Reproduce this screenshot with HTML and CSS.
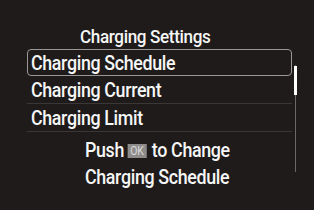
FILE: index.html
```html
<!DOCTYPE html>
<html>
<head>
<meta charset="utf-8">
<link rel="stylesheet" href="styles.css">
</head>
<body>
<div class="screen">
  <div class="main">
    <div class="title"><span class="tx">Charging Settings</span></div>
    <div class="list">
      <div class="row selected"><span class="tx">Charging Schedule</span></div>
      <div class="row"><span class="tx">Charging Current</span></div>
      <div class="row"><span class="tx">Charging Limit</span></div>
    </div>
    <div class="hint first"><span class="tx">Push<span class="ok">OK</span>to Change</span></div>
    <div class="hint"><span class="tx">Charging Schedule</span></div>
  </div>
  <div class="scroll"><div class="thumb"></div></div>
</div>
</body>
</html>
```
FILE: styles.css
```css
html, body { margin: 0; padding: 0; background: #ffffff; }
body { width: 316px; height: 212px; overflow: hidden; }
.screen {
  width: 314px; height: 210px; background: #1e1b1a;
  display: flex; color: #f6f6f6;
  font-family: Roboto, "Open Sans", sans-serif; font-weight: 500;
}
.tx { display: inline-block; white-space: nowrap; transform: scaleX(0.87); transform-origin: left center; }
.main { width: 295px; display: flex; flex-direction: column; }
.title {
  font-size: 19px; letter-spacing: -0.4px; line-height: 20px;
  margin-top: 27px; padding-left: 80px;
}
.title .tx { transform: scaleX(0.9); }
.list { margin: 2px 0 0 27px; width: 265px; }
.row {
  height: 28px; box-sizing: border-box; padding-left: 4px;
  font-size: 20.5px; letter-spacing: -0.4px; line-height: 28px;
  border-bottom: 1px solid #3a3736;
}
.row.selected { border: 1px solid #9a9897; border-radius: 4px; height: 27px; padding-left: 3px; line-height: 26px; }
.hint {
  font-size: 20.5px; letter-spacing: -0.4px; line-height: 27px;
  padding-left: 85px;
}
.hint.first { margin-top: 5px; }
.ok {
  display: inline-block; box-sizing: border-box; width: 22px; height: 14px;
  background: #8e8c8b; color: #dadada; text-align: center;
  font-size: 12px; font-weight: 400; line-height: 14px; letter-spacing: 0;
  vertical-align: 2px; margin: 0 6px 0 4px;
}
.scroll { width: 1px; height: 107px; margin-top: 65px; background: #6a6766; position: relative; }
.thumb { position: absolute; left: -1px; top: 1px; width: 3px; height: 29px; background: #ffffff; }
```
